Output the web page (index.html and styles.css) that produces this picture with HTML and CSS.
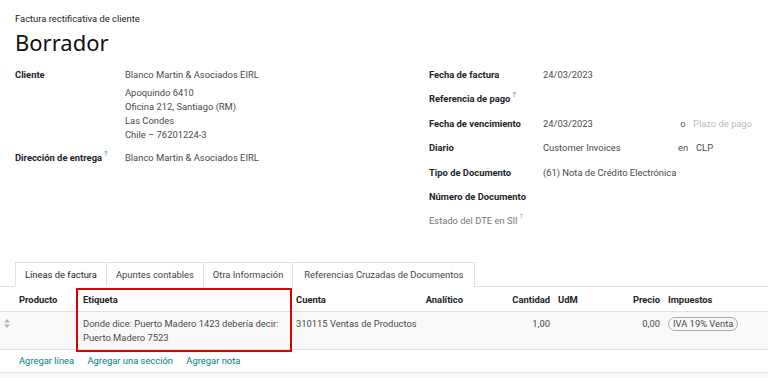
FILE: index.html
```html
<!DOCTYPE html>
<html lang="es">
<head>
  <meta charset="UTF-8" />
  <title>Factura rectificativa de cliente</title>
  <link rel="stylesheet" href="styles.css">
</head>
<body>
  <div class="sheet">
    <div class="doc-type">Factura rectificativa de cliente</div>
    <h1 class="doc-name">Borrador</h1>

    <div class="groups">
      <div class="group left">
        <div class="field">
          <div class="label">Cliente</div>
          <div class="value">
            <div>Blanco Martin &amp; Asociados EIRL</div>
            <div class="address">
              <div>Apoquindo 6410</div>
              <div>Oficina 212, Santiago (RM)</div>
              <div>Las Condes</div>
              <div>Chile – 76201224-3</div>
            </div>
          </div>
        </div>
        <div class="field">
          <div class="label">Dirección de entrega<sup>?</sup></div>
          <div class="value">Blanco Martin &amp; Asociados EIRL</div>
        </div>
      </div>

      <div class="group right">
        <div class="field">
          <div class="label">Fecha de factura</div>
          <div class="value">24/03/2023</div>
        </div>
        <div class="field">
          <div class="label">Referencia de pago<sup>?</sup></div>
          <div class="value"></div>
        </div>
        <div class="field">
          <div class="label">Fecha de vencimiento</div>
          <div class="value split">
            <span class="main">24/03/2023</span>
            <span class="muted">o</span>
            <span class="placeholder">Plazo de pago</span>
          </div>
        </div>
        <div class="field">
          <div class="label">Diario</div>
          <div class="value split">
            <span class="main">Customer Invoices</span>
            <span class="muted">en</span>
            <span class="currency">CLP</span>
          </div>
        </div>
        <div class="field">
          <div class="label">Tipo de Documento</div>
          <div class="value">(61) Nota de Crédito Electrónica</div>
        </div>
        <div class="field">
          <div class="label">Número de Documento</div>
          <div class="value"></div>
        </div>
        <div class="field">
          <div class="label light">Estado del DTE en SII<sup>?</sup></div>
          <div class="value"></div>
        </div>
      </div>
    </div>
  </div>

  <div class="tabs">
    <div class="tab active">Líneas de factura</div>
    <div class="tab">Apuntes contables</div>
    <div class="tab">Otra Información</div>
    <div class="tab">Referencias Cruzadas de Documentos</div>
  </div>

  <div class="lines">
    <table class="lines-table">
      <colgroup>
        <col class="c-handle">
        <col class="c-product">
        <col class="c-label">
        <col class="c-account">
        <col class="c-analytic">
        <col class="c-qty">
        <col class="c-uom">
        <col class="c-price">
        <col class="c-taxes">
      </colgroup>
      <thead>
        <tr>
          <th></th>
          <th>Producto</th>
          <th>Etiqueta</th>
          <th>Cuenta</th>
          <th class="num">Analítico</th>
          <th class="num">Cantidad</th>
          <th>UdM</th>
          <th class="num">Precio</th>
          <th>Impuestos</th>
        </tr>
      </thead>
      <tbody>
        <tr class="line">
          <td class="handle-cell">
            <svg class="handle" width="6" height="9" viewBox="0 0 6 9">
              <path d="M3 0 L6 3.5 H0 Z M3 9 L6 5.5 H0 Z" fill="#b5b5b5"/>
            </svg>
          </td>
          <td></td>
          <td class="label-cell">Donde dice: Puerto Madero 1423 debería decir: Puerto Madero 7523</td>
          <td class="nowrap">310115 Ventas de Productos</td>
          <td></td>
          <td class="num">1,00</td>
          <td></td>
          <td class="num">0,00</td>
          <td><span class="badge">IVA 19% Venta</span></td>
        </tr>
        <tr class="add">
          <td></td>
          <td colspan="8">
            <a href="#">Agregar línea</a>
            <a href="#">Agregar una sección</a>
            <a href="#">Agregar nota</a>
          </td>
        </tr>
        <tr class="filler"><td colspan="9"></td></tr>
      </tbody>
    </table>
    <div class="highlight"></div>
  </div>
</body>
</html>
```

FILE: styles.css
```css
body {
  margin: 0;
  background: white;
  color: #212529;
  font-family: Roboto, "Noto Sans", sans-serif;
  font-size: 9.4px;
  overflow: hidden;
}

.sheet {
  padding: 12px 15px 0 15px;
}

.doc-type {
  line-height: 14px;
  color: #222;
}

.doc-name {
  margin: 2px 0 0 0;
  font-family: "Noto Sans", sans-serif;
  font-size: 22px;
  font-weight: 400;
  line-height: 28px;
  color: #111;
}

.groups {
  display: grid;
  grid-template-columns: 414px 1fr;
  margin-top: 12px;
}

.field {
  display: flex;
  line-height: 14px;
}

.left .field {
  margin-bottom: 9px;
}

.right .field {
  min-height: 14px;
  margin-bottom: 10.4px;
}

.label {
  width: 110px;
  flex-shrink: 0;
  font-weight: 700;
  color: #212529;
}

.right .label {
  width: 114px;
}

.label.light {
  font-weight: 400;
  color: #777;
}

sup {
  font-size: 7px;
  color: #7aa7c7;
  margin-left: 2px;
  vertical-align: 5px;
  line-height: 0;
}

.value {
  flex: 1;
  color: #4a4a4a;
}

.address {
  margin-top: 4px;
}

.split {
  display: flex;
  white-space: nowrap;
}

.split .main {
  width: 130px;
}

.split .muted {
  color: #555;
  width: 20px;
  text-align: center;
}

.currency {
  margin-left: 3px;
}

.placeholder {
  color: #bbb;
}

.tabs {
  display: flex;
  margin-top: 23px;
  padding-left: 15px;
  border-bottom: 1px solid #dee2e6;
}

.tab {
  padding: 5px 9px 4px 9px;
  line-height: 14px;
  color: #444;
  border: 1px solid #dee2e6;
  border-bottom: none;
  border-left: none;
  margin-bottom: -1px;
  background: white;
}

.tab:first-child {
  border-left: 1px solid #dee2e6;
}

.tab:last-child {
  padding: 5px 11px 4px 11px;
}

.tab.active {
  color: #212529;
  border-bottom: 1px solid white;
}

.lines {
  position: relative;
}

.lines-table {
  width: 768px;
  table-layout: fixed;
  border-collapse: collapse;
}

.c-handle { width: 15px; }
.c-product { width: 64px; }
.c-label { width: 213px; }
.c-account { width: 100px; }
.c-analytic { width: 75px; }
.c-qty { width: 87px; }
.c-uom { width: 46px; }
.c-price { width: 64px; }
.c-taxes { width: 104px; }

.lines-table th {
  text-align: left;
  font-weight: 700;
  color: #212529;
  padding: 6px 4px 4px 4px;
  line-height: 14px;
  border-bottom: 1px solid #dee2e6;
}

.lines-table td {
  padding: 5px 4px 4px 4px;
  line-height: 14px;
  vertical-align: top;
  color: #4a4a4a;
}

.lines-table .num {
  text-align: right;
}

.lines-table .label-cell {
  padding-right: 1px;
}

.nowrap {
  white-space: nowrap;
  overflow: visible;
}

.line td {
  background: #f9f9f9;
  border-bottom: 1px solid #dee2e6;
}

.lines-table .handle-cell {
  padding: 7px 0 0 4px;
}

.handle {
  display: block;
}

.badge {
  display: inline-block;
  border: 1px solid #aaa;
  border-radius: 8px;
  padding: 0 4px;
  line-height: 12px;
  color: #4a4a4a;
}

.lines-table .add td {
  padding: 4px 4px 4px 4px;
  border-bottom: 1px solid #dee2e6;
}

.add a {
  color: #017e84;
  text-decoration: none;
  margin-right: 11px;
}

.filler td {
  background: #f9f9f9;
  height: 10px;
  padding: 0;
}

.highlight {
  position: absolute;
  left: 76px;
  top: 1px;
  width: 212px;
  height: 60px;
  border: 2px solid #e00000;
}
```
